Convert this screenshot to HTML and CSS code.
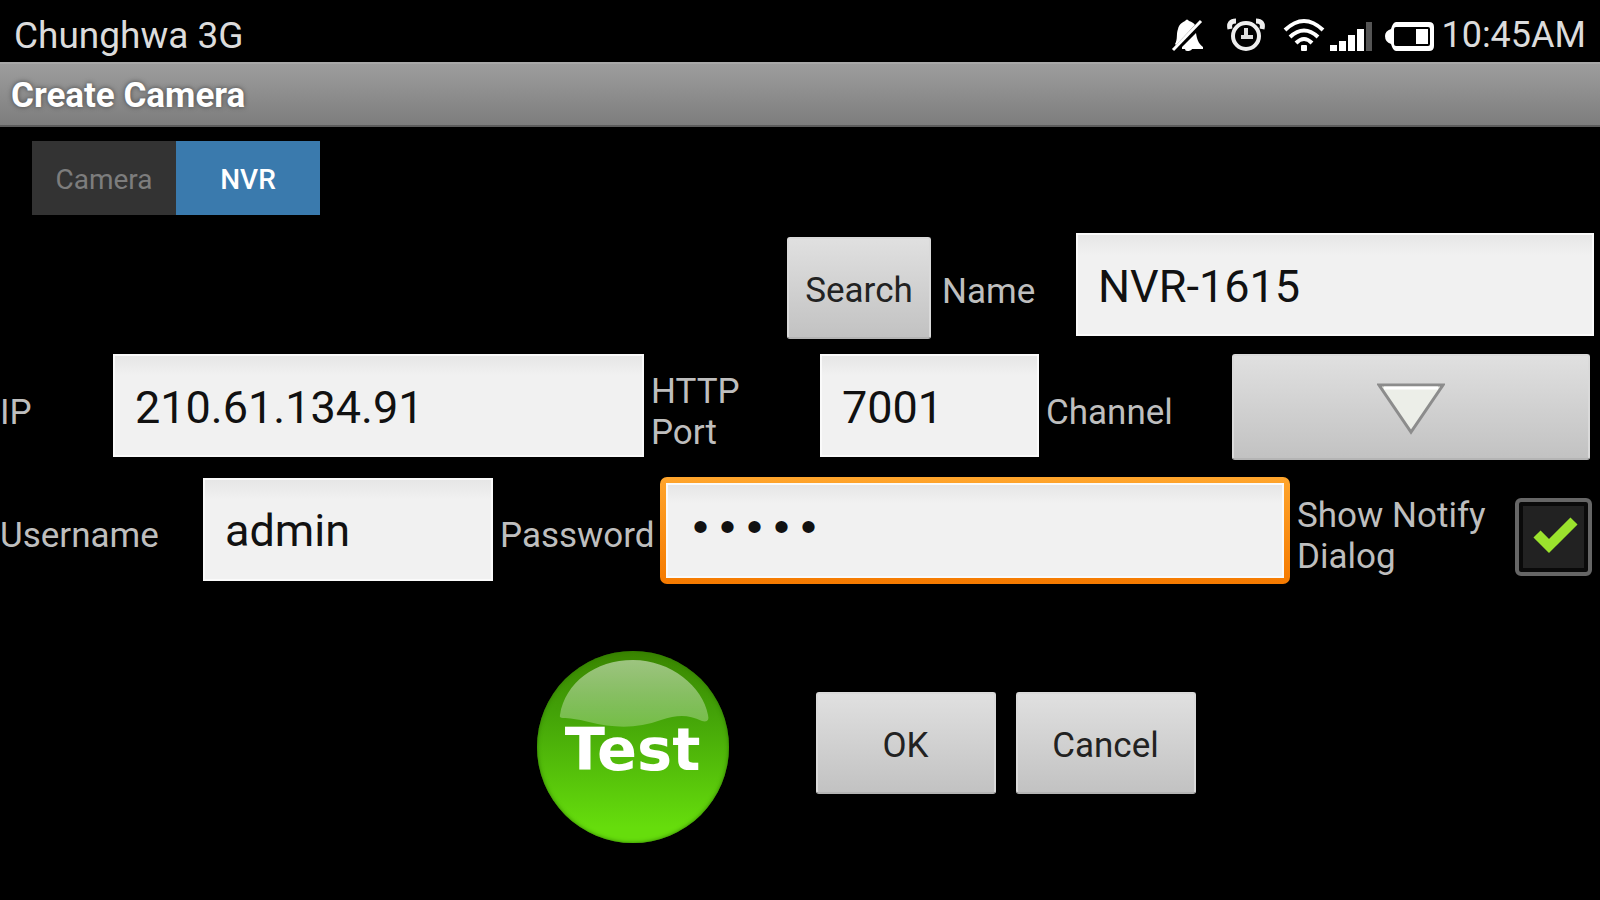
FILE: index.html
```html
<!DOCTYPE html>
<html lang="en">
<head>
    <meta charset="UTF-8">
    <meta name="viewport" content="width=device-width, initial-scale=1.0">
    <title>Create Camera</title>
    <link rel="stylesheet" href="styles.css">
</head>
<body>
    <div class="status-bar">
        <span class="carrier">Chunghwa 3G</span>
        <div class="status-icons">
            <svg class="bell" width="34" height="36" viewBox="0 0 34 36">
                <path d="M4 27 C7 22 5 17 7 12 C8 7 12 5 14 4 Q16 1 18 4 C21 5 23 6 24 8 L5 28 Z" fill="#fff"/>
                <path d="M11 30 L25 16 C26 22 27 26 32 30 L32 32 L21 32 Q20 34 16 34 Q14 34 14 32 L11 32 Z" fill="#fff"/>
                <path d="M2 33 L30 4" stroke="#fff" stroke-width="3"/>
            </svg>
            <svg class="alarm" width="38" height="36" viewBox="0 0 38 36">
                <circle cx="19" cy="19" r="13" fill="none" stroke="#eee" stroke-width="4"/>
                <path d="M19 11 V20 H26 M14 20 H19" fill="none" stroke="#ddd" stroke-width="4"/>
                <path d="M3 12 Q1 4 9 4 M35 12 Q37 4 29 4" fill="none" stroke="#eee" stroke-width="5"/>
            </svg>
            <svg class="wifi" width="42" height="36" viewBox="0 0 42 36">
                <path d="M2 13 Q21 -5 40 13 M7 20 Q21 7 35 20 M13 26 Q21 18 29 26" fill="none" stroke="#fff" stroke-width="4"/>
                <rect x="18" y="28" width="6" height="6" rx="1" fill="#fff"/>
            </svg>
            <svg class="signal" width="44" height="36" viewBox="0 0 44 36">
                <path d="M1 28h7v6H1z M10 24h7v10h-7z M19 18h7v16h-7z M28 12h7v22h-7z" fill="#fff"/>
                <path d="M37 5h6v29h-6z" fill="#555"/>
            </svg>
            <svg class="battery" width="50" height="36" viewBox="0 0 50 36">
                <path d="M11 5 H44 Q49 5 49 10 V29 Q49 34 44 34 H11 Q8 34 6 27 Q0 25 0 19 Q0 14 6 12 Q8 5 11 5 Z" fill="#fff"/>
                <rect x="9" y="10" width="36" height="19" rx="2" fill="#000"/>
                <rect x="31" y="12" width="12" height="15" fill="#fff"/>
            </svg>
        </div>
        <span>10:45AM</span>
    </div>

    <header>
        <h1>Create Camera</h1>
    </header>

    <div class="tabs">
        <button type="button">Camera</button>
        <button type="button" class="active">NVR</button>
    </div>

    <form>
        <div class="row row-name">
            <button type="button" class="btn search">Search</button>
            <label for="name" class="wide">Name</label>
            <input type="text" id="name" class="field" value="NVR-1615">
        </div>

        <div class="row row-address">
            <label for="ip" class="first">IP</label>
            <input type="text" id="ip" class="field" value="210.61.134.91">
            <label for="port">HTTP<br>Port</label>
            <input type="text" id="port" class="field" value="7001">
            <label for="channel">Channel</label>
            <div class="spinner">
                <select id="channel" class="btn">
                    <option value=""></option>
                </select>
                <svg width="68" height="52" viewBox="0 0 68 52">
                    <path d="M2 2 H66 L34 49 Z" fill="#eceee8" stroke="#8c8c8c" stroke-width="3"/>
                    <path d="M7 5 H61" stroke="#fff" stroke-width="3"/>
                </svg>
            </div>
        </div>

        <div class="row row-login">
            <label for="username" class="first">Username</label>
            <input type="text" id="username" class="field" value="admin">
            <label for="password">Password</label>
            <div class="focus-ring">
                <input type="password" id="password" class="field" value="admin">
            </div>
            <label for="notify">Show Notify<br>Dialog</label>
            <div class="check">
                <input type="checkbox" id="notify" checked>
                <svg width="46" height="40" viewBox="0 0 46 40">
                    <path d="M4 19 L16 31 L41 6" fill="none" stroke="#9be32d" stroke-width="10"/>
                </svg>
            </div>
        </div>

        <div class="actions">
            <button type="button" class="test">
                <svg width="192" height="192" viewBox="0 0 192 192">
                    <defs>
                        <linearGradient id="gloss" x1="0" y1="0" x2="0" y2="1">
                            <stop offset="0" stop-color="#fff" stop-opacity="0.5"/>
                            <stop offset="1" stop-color="#fff" stop-opacity="0.25"/>
                        </linearGradient>
                    </defs>
                    <path d="M23 64 C28 32 58 9 96 9 C134 9 166 36 171 64 Q173 72 165 70 C150 63 140 64 124 69 C100 78 76 77 52 71 C40 68 32 67 26 67 Q22 67 23 64 Z" fill="url(#gloss)"/>
                </svg>
                <span>Test</span>
            </button>
            <div class="dialog-buttons">
                <button type="submit" class="btn">OK</button>
                <button type="button" class="btn">Cancel</button>
            </div>
        </div>
    </form>
</body>
</html>
```
FILE: styles.css
```css
* {
    box-sizing: border-box;
}
body {
    font-family: Roboto, sans-serif;
    margin: 0;
    background-color: #000;
    color: #bebebe;
}
button, input, select {
    font-family: inherit;
    border: none;
    border-radius: 0;
    margin: 0;
    padding: 0;
}
.status-bar {
    display: flex;
    align-items: center;
    justify-content: space-between;
    height: 62px;
    padding: 8px 14px 0;
    font-size: 36px;
    color: #dcdcdc;
}
.carrier {
    font-size: 37px;
}
.status-icons {
    display: flex;
    margin-left: auto;
    margin-right: 6px;
}
.alarm {
    margin-left: 22px;
}
.wifi {
    margin-left: 18px;
}
.signal {
    margin-left: 4px;
}
.battery {
    margin-left: 12px;
}
header {
    height: 65px;
    padding: 0 11px;
    background: linear-gradient(#9d9d9d, #7d7d7d);
    border-top: 2px solid #a8a8a8;
    border-bottom: 2px solid #5c5c5c;
}
header h1 {
    margin: 0;
    font-size: 35px;
    line-height: 64px;
    color: #fff;
    text-shadow: 0 0 5px #444;
}
.tabs {
    display: flex;
    padding: 14px 32px 0;
}
.tabs button {
    width: 144px;
    height: 74px;
    padding-top: 2px;
    background-color: #333;
    color: #7d7d7d;
    font-size: 28px;
}
.tabs .active {
    background-color: #3a7aad;
    color: #fff;
    font-weight: 500;
}
form {
    padding-top: 18px;
}
.row {
    display: grid;
    align-items: center;
    min-height: 106px;
    margin-bottom: 15px;
}
.row-name {
    grid-template-columns: 787fr 144px 145px 518fr;
    padding-right: 6px;
}
.row-address {
    grid-template-columns: 113px 531fr 176px 219fr 193px 358fr;
    padding-right: 10px;
}
.row-login {
    grid-template-columns: 203px 290fr 167px 630fr 225px 77px;
    padding-right: 8px;
    margin-top: 17px;
}
label {
    padding: 10px 0 0 7px;
    font-size: 35px;
    line-height: 41px;
    white-space: nowrap;
}
label.first {
    padding-left: 0;
}
label.wide {
    padding-left: 11px;
}
.field {
    width: 100%;
    height: 103px;
    margin-bottom: 3px;
    padding: 3px 20px 0;
    background: linear-gradient(#e6e6e6, #f1f1f1 20%);
    border: 2px solid #fafafa;
    font-size: 45px;
    color: #111;
    outline: none;
}
.btn {
    height: 102px;
    padding-top: 4px;
    background: linear-gradient(#e0e0e0, #c2c2c2);
    border: 2px solid #dadada;
    border-bottom-color: #b4b4b4;
    border-radius: 3px;
    font-size: 35px;
    color: #222;
}
.search {
    grid-column: 2;
    margin-top: 4px;
}
.spinner {
    display: grid;
    position: relative;
}
.spinner select {
    width: 100%;
    height: 106px;
    appearance: none;
}
.spinner svg {
    position: absolute;
    top: 29px;
    left: calc(50% - 34px);
    pointer-events: none;
}
.focus-ring {
    padding: 6px;
    background: linear-gradient(#ffa52c, #f57a00);
    border-radius: 7px;
}
.focus-ring .field {
    display: block;
    height: 95px;
    margin: 0;
    padding: 0 19px;
    font-family: "Liberation Mono", monospace;
}
.check {
    position: relative;
    height: 78px;
    margin-top: 12px;
}
.check input {
    display: block;
    width: 100%;
    height: 100%;
    appearance: none;
    background-color: #222;
    border: 4px solid #666;
    border-radius: 6px;
    box-shadow: inset 0 0 0 4px #0a0a0a;
}
.check svg {
    position: absolute;
    top: 17px;
    left: 18px;
    pointer-events: none;
}
.check input:not(:checked) + svg {
    display: none;
}
.actions {
    display: flex;
    align-items: center;
    justify-content: center;
    gap: 87px;
    padding: 52px 0 0 132px;
}
.test {
    position: relative;
    width: 192px;
    height: 192px;
    padding-top: 4px;
    border-radius: 50%;
    background: linear-gradient(#3a8500, #42a008 30%, #66dd0c 92%);
    box-shadow: inset 0 0 4px #2f7a00;
    color: #fff;
    font-family: "DejaVu Sans", sans-serif;
    font-size: 59px;
    font-weight: bold;
}
.test svg {
    position: absolute;
    top: 0;
    left: 0;
}
.test span {
    position: relative;
}
.dialog-buttons {
    display: flex;
    gap: 20px;
    margin-bottom: 8px;
}
.dialog-buttons .btn {
    width: 180px;
}
```
